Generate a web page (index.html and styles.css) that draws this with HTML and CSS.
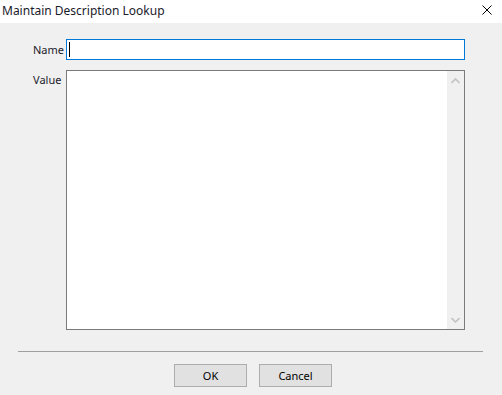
FILE: index.html
```html
<!DOCTYPE html>
<html lang="en">
<head>
    <meta charset="UTF-8">
    <title>Maintain Description Lookup</title>
    <link rel="stylesheet" href="styles.css">
</head>
<body>
    <div class="window">
        <div class="titlebar">
            <span class="title">Maintain Description Lookup</span>
            <span class="close">
                <svg width="10" height="10" viewBox="0 0 10 10">
                    <path d="M0.5 0.5 L9.5 9.5 M9.5 0.5 L0.5 9.5" stroke="#000" stroke-width="1" fill="none"/>
                </svg>
            </span>
        </div>
        <div class="content">
            <div class="form">
                <label class="label">Name</label>
                <div class="input focused"><span class="caret"></span></div>
                <label class="label label-top">Value</label>
                <div class="textbox">
                    <div class="textbox-body"></div>
                    <div class="scrollbar">
                        <svg width="9" height="6" viewBox="0 0 9 6">
                            <path d="M0.5 5 L4.5 1 L8.5 5" stroke="#c2c2c2" stroke-width="1.6" fill="none"/>
                        </svg>
                        <svg width="9" height="6" viewBox="0 0 9 6">
                            <path d="M0.5 1 L4.5 5 L8.5 1" stroke="#c2c2c2" stroke-width="1.6" fill="none"/>
                        </svg>
                    </div>
                </div>
            </div>
            <div class="separator"></div>
            <div class="buttons">
                <button type="button">OK</button>
                <button type="button">Cancel</button>
            </div>
        </div>
    </div>
</body>
</html>
```

FILE: styles.css
```css
body {
    margin: 0;
    background-color: #f0f0f0;
    font-family: "Noto Sans", "DejaVu Sans", sans-serif;
    font-size: 12px;
    color: #000;
}
.window {
    width: 502px;
    height: 395px;
    display: flex;
    flex-direction: column;
}
.titlebar {
    height: 23px;
    background-color: #fff;
    display: flex;
    align-items: center;
    justify-content: space-between;
    padding-left: 2px;
    padding-right: 10px;
}
.title {
    font-size: 12px;
    color: #1a1a2a;
    margin-top: -3px;
}
.close {
    display: flex;
    margin-top: -3px;
}
.content {
    padding-top: 16px;
}
.form {
    display: grid;
    grid-template-columns: 33px 399px;
    grid-template-rows: 21px 260px;
    row-gap: 10px;
    padding-left: 33px;
}
.label {
    display: flex;
    align-items: center;
    font-size: 11px;
    color: #1a1a2a;
}
.label-top {
    align-items: flex-start;
    padding-top: 2px;
}
.input {
    background-color: #fff;
    border: 1px solid #0078d7;
    display: flex;
    align-items: center;
    padding-left: 2px;
}
.caret {
    width: 1px;
    height: 15px;
    background-color: #000;
}
.textbox {
    background-color: #fff;
    border: 1px solid #7a7a7a;
    display: flex;
}
.textbox-body {
    flex: 1;
}
.scrollbar {
    width: 17px;
    background-color: #f0f0f0;
    display: flex;
    flex-direction: column;
    align-items: center;
    justify-content: space-between;
    padding: 7px 0 6px;
}
.separator {
    margin: 21px 19px 0 18px;
    height: 1px;
    background-color: #a0a0a0;
}
.buttons {
    display: flex;
    justify-content: center;
    gap: 12px;
    padding-top: 12px;
    padding-left: 4px;
}
button {
    width: 73px;
    height: 23px;
    background-color: #e1e1e1;
    border: 1px solid #adadad;
    font-family: "Noto Sans", "DejaVu Sans", sans-serif;
    font-size: 11px;
    color: #000;
    padding: 0;
}
```
